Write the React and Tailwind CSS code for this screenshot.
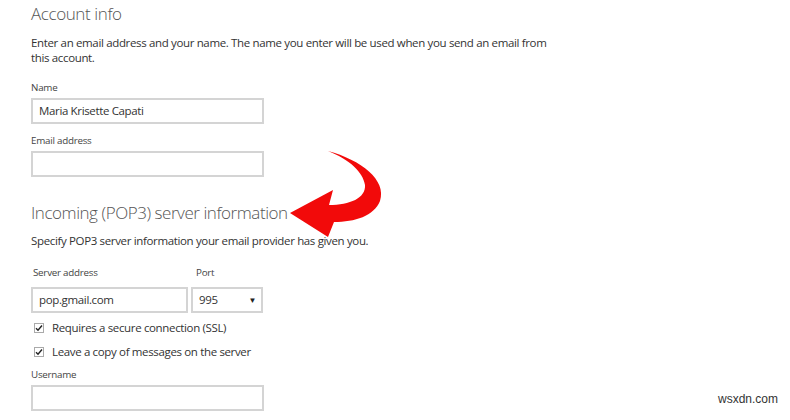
import React from 'react';

const font = { fontFamily: '"Open Sans", "Noto Sans", sans-serif' };

const Field = ({ label, value, className = '' }) => (
  <div className={className}>
    <div className="text-[9.8px] leading-[14px] tracking-[-0.25px] text-[#444]">{label}</div>
    <div className="mt-[3px] w-[233px] h-[26px] border-2 border-[#d4d4d4] bg-white px-[6px] flex items-center text-[11.5px] tracking-[-0.35px] text-[#333]">
      {value}
    </div>
  </div>
);

const Check = ({ label, className = '' }) => (
  <div className={`flex items-center gap-[8px] pl-[3px] ${className}`}>
    <div className="w-[10px] h-[10px] border border-[#aaa] bg-white flex items-center justify-center">
      <svg width="8" height="8" viewBox="0 0 8 8">
        <path d="M1 4.2 L3 6.2 L7 1.5" fill="none" stroke="#222" strokeWidth="1.4" />
      </svg>
    </div>
    <span className="text-[11.5px] leading-[16px] tracking-[-0.35px] text-[#333]">{label}</span>
  </div>
);

const Arrow = () => (
  <svg className="absolute left-0 top-0" width="790" height="420" viewBox="0 0 790 420">
    <path
      d="M328 151 C361 160 387 180 380 201 C374 216 355 222 334 222 L328 237 L290 213 L333 190 L329 205 C350 205 366 198 365 185 C363 172 350 160 328 151 Z"
      fill="#f20a0a"
    />
  </svg>
);

export default function App() {
  return (
    <div className="relative w-[790px] h-[420px] bg-white overflow-hidden" style={font}>
      <div className="pl-[31px] pt-[1px]">
        <h1 className="text-[17px] leading-[26px] font-light tracking-[-0.4px] text-[#555]">Account info</h1>
        <p className="mt-[8px] w-[520px] text-[11.5px] leading-[15px] tracking-[-0.35px] text-[#333]">
          Enter an email address and your name. The name you enter will be used when you send an email from this account.
        </p>
        <Field className="mt-[16px]" label="Name" value="Maria Krisette Capati" />
        <Field className="mt-[10px]" label="Email address" value="" />
        <h2 className="mt-[23px] text-[17px] leading-[26px] font-light tracking-[-0.45px] text-[#555]">
          Incoming (POP3) server information
        </h2>
        <p className="mt-[7px] text-[11.5px] leading-[15px] tracking-[-0.35px] text-[#333]">
          Specify POP3 server information your email provider has given you.
        </p>
        <div className="mt-[18px] flex gap-[3px]">
          <div>
            <div className="pl-[2px] text-[9.8px] leading-[14px] tracking-[-0.25px] text-[#444]">Server address</div>
            <div className="mt-[7px] w-[157px] h-[26px] border-2 border-[#d4d4d4] px-[6px] flex items-center text-[11.5px] tracking-[-0.35px] text-[#333]">
              pop.gmail.com
            </div>
          </div>
          <div>
            <div className="pl-[5px] text-[9.8px] leading-[14px] tracking-[-0.25px] text-[#444]">Port</div>
            <div className="mt-[7px] w-[72px] h-[26px] border-2 border-[#d4d4d4] pl-[6px] pr-[5px] flex items-center justify-between text-[11.5px] tracking-[-0.35px] text-[#333]">
              <span>995</span>
              <span className="text-[8px] text-[#222]">▼</span>
            </div>
          </div>
        </div>
        <Check className="mt-[7px]" label="Requires a secure connection (SSL)" />
        <Check className="mt-[8px]" label="Leave a copy of messages on the server" />
        <Field className="mt-[8px]" label="Username" value="" />
      </div>
      <Arrow />
      <div className="absolute right-[12px] bottom-[12px] text-[12px] text-[#333]" style={{ fontFamily: '"Liberation Sans", Arial, sans-serif' }}>
        wsxdn.com
      </div>
    </div>
  );
}
